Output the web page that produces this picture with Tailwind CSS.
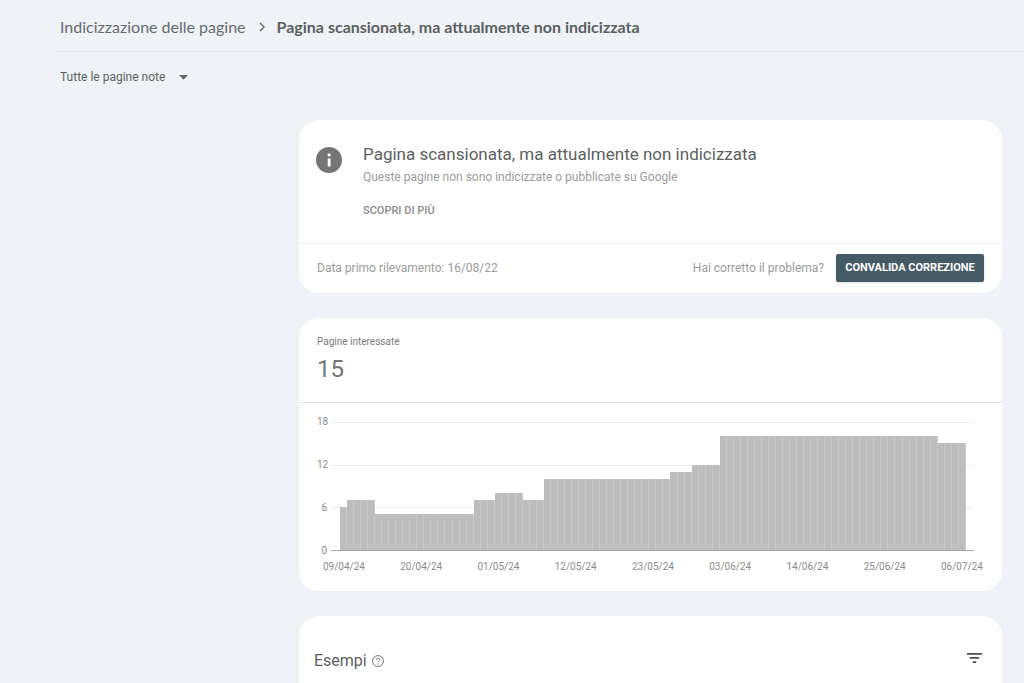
<!DOCTYPE html>
<html lang="it">
<head>
<meta charset="utf-8">
<meta name="viewport" content="width=device-width, initial-scale=1">
<title>Indicizzazione delle pagine</title>
<script src="https://cdn.jsdelivr.net/npm/@tailwindcss/browser@4"></script>
</head>
<body class="min-h-screen overflow-hidden bg-[#eff3f8] font-['Roboto',sans-serif] text-[#5c5f61]">
  <header class="ml-14 border-b border-[#e4e8ee] pl-1">
    <nav aria-label="Percorso" class="flex h-[51px] items-center pt-0.5 font-['Lato',sans-serif] text-base">
      <a href="#" class="text-[#666a6d]">Indicizzazione delle pagine</a>
      <svg class="mr-[11px] ml-3 h-2.5 w-2" viewBox="0 0 8 10" fill="none" stroke="#6b6e70" stroke-width="1.5" aria-hidden="true"><path d="M2 1l4 4-4 4"/></svg>
      <h1 class="font-bold">Pagina scansionata, ma attualmente non indicizzata</h1>
    </nav>
  </header>

  <div class="px-[60px] pt-[15px]">
    <button type="button" class="flex h-5 items-center gap-[14px] text-xs">
      <span>Tutte le pagine note</span>
      <svg class="h-[5px] w-[9px]" viewBox="0 0 9 5" fill="#666" aria-hidden="true"><path d="M0 0h9L4.500 4.800z"/></svg>
    </button>
  </div>

  <main class="ml-[299px] mr-[22px] flex flex-col gap-[25px] pt-[33px]">
    <section class="rounded-[20px] bg-white">
      <div class="flex gap-[21px] border-b border-[#e9ebec] px-[17px] py-[22px]">
        <svg class="mt-[5px] h-[26px] w-[26px] shrink-0" viewBox="0 0 26 26" aria-hidden="true"><circle cx="13" cy="13" r="13" fill="#757575"/><path d="M11.700 6.500h2.800v2.700h-2.800zM11.700 11.500h2.800v8h-2.800z" fill="#fff"/></svg>
        <div class="flex flex-col items-start">
          <h2 class="text-[17px] leading-6">Pagina scansionata, ma attualmente non indicizzata</h2>
          <p class="mt-px text-xs leading-5 text-[#9b9b9b]">Queste pagine non sono indicizzate o pubblicate su Google</p>
          <a href="#" class="mt-[14px] text-[11px] leading-5 font-medium text-[#8a8a8a]">SCOPRI DI PIÙ</a>
        </div>
      </div>
      <div class="flex items-center gap-3 px-[18px] pt-2.5 pb-[11px] text-xs text-[#9b9b9b]">
        <p class="mr-auto">Data primo rilevamento: 16/08/22</p>
        <p>Hai corretto il problema?</p>
        <button type="button" class="h-7 w-[148px] rounded-xs bg-[#455a64] text-[11px] font-bold whitespace-nowrap text-white shadow-sm">CONVALIDA CORREZIONE</button>
      </div>
    </section>

    <section class="rounded-[20px] bg-white">
      <div class="border-b border-[#e2e4e4] px-[18px] pt-4 pb-[17px]">
        <p class="text-[10px] leading-4 text-[#7b7b7b]">Pagine interessate</p>
        <p class="mt-[3px] text-2xl leading-8 text-[#757575]">15</p>
      </div>
      <div class="pt-[13px] pr-[19px] pb-[18px] pl-[18px] text-[10px] leading-3 text-[#8a8a8a]">
        <div class="flex gap-1">
          <div class="flex w-[10px] flex-col justify-between text-right" aria-hidden="true">
            <span>18</span><span>12</span><span>6</span><span>0</span>
          </div>
          <div class="relative mr-[9px] h-[141px] flex-1">
            <div class="flex h-full flex-col justify-between py-[6px]">
              <div class="h-px bg-[#efefef]"></div>
              <div class="h-px bg-[#efefef]"></div>
              <div class="h-px bg-[#efefef]"></div>
              <div class="h-px bg-[#a9a9a9]"></div>
            </div>
            <div id="bars" role="img" aria-label="Pagine interessate per giorno" class="absolute top-[6px] right-2 bottom-[7px] left-[9px] flex items-end"></div>
          </div>
        </div>
        <div class="mt-1 ml-[6px] flex justify-between">
          <span>09/04/24</span><span>20/04/24</span><span>01/05/24</span><span>12/05/24</span><span>23/05/24</span><span>03/06/24</span><span>14/06/24</span><span>25/06/24</span><span>06/07/24</span>
        </div>
      </div>
    </section>

    <section class="rounded-t-[20px] bg-white">
      <div class="flex items-center px-[15px] pt-[33px] pb-6">
        <h2 class="text-base">Esempi</h2>
        <button type="button" aria-label="Guida" class="ml-[5px]">
          <svg class="h-3 w-3" viewBox="0 0 12 12" fill="none" stroke="#757575" aria-hidden="true"><circle cx="6" cy="6" r="5.400"/><path d="M4.400 4.900c0-2.300 3.300-2.200 3.300-.1 0 1.200-1.600 1.300-1.600 2.500M6.100 8.300v1.100"/></svg>
        </button>
        <button type="button" aria-label="Filtra" class="mr-[5px] mb-1.5 ml-auto">
          <svg class="h-[10px] w-[15px]" viewBox="0 0 15 10" fill="#4f4f4f" aria-hidden="true"><path d="M0 0h15v1.700H0zM2.800 4.100h9.400v1.700H2.800zM5.800 8.200h3.400v1.700H5.800z"/></svg>
        </button>
      </div>
    </section>
  </main>

  <script>
    // Runs of [days, affected pages], from 09/04/24 to 06/07/24.
    const runs = [[1,6],[4,7],[14,5],[3,7],[4,8],[3,7],[18,10],[3,11],[4,12],[31,16],[4,15]];
    const bars = document.getElementById('bars');
    for (const [days, pages] of runs) {
      for (let i = 0; i < days; i++) {
        const bar = document.createElement('div');
        bar.className = 'flex-1 border-r border-[#c9c9c9] bg-[#bdbdbd]';
        bar.style.height = (pages / 18 * 100) + '%';
        bars.append(bar);
      }
    }
  </script>
</body>
</html>
